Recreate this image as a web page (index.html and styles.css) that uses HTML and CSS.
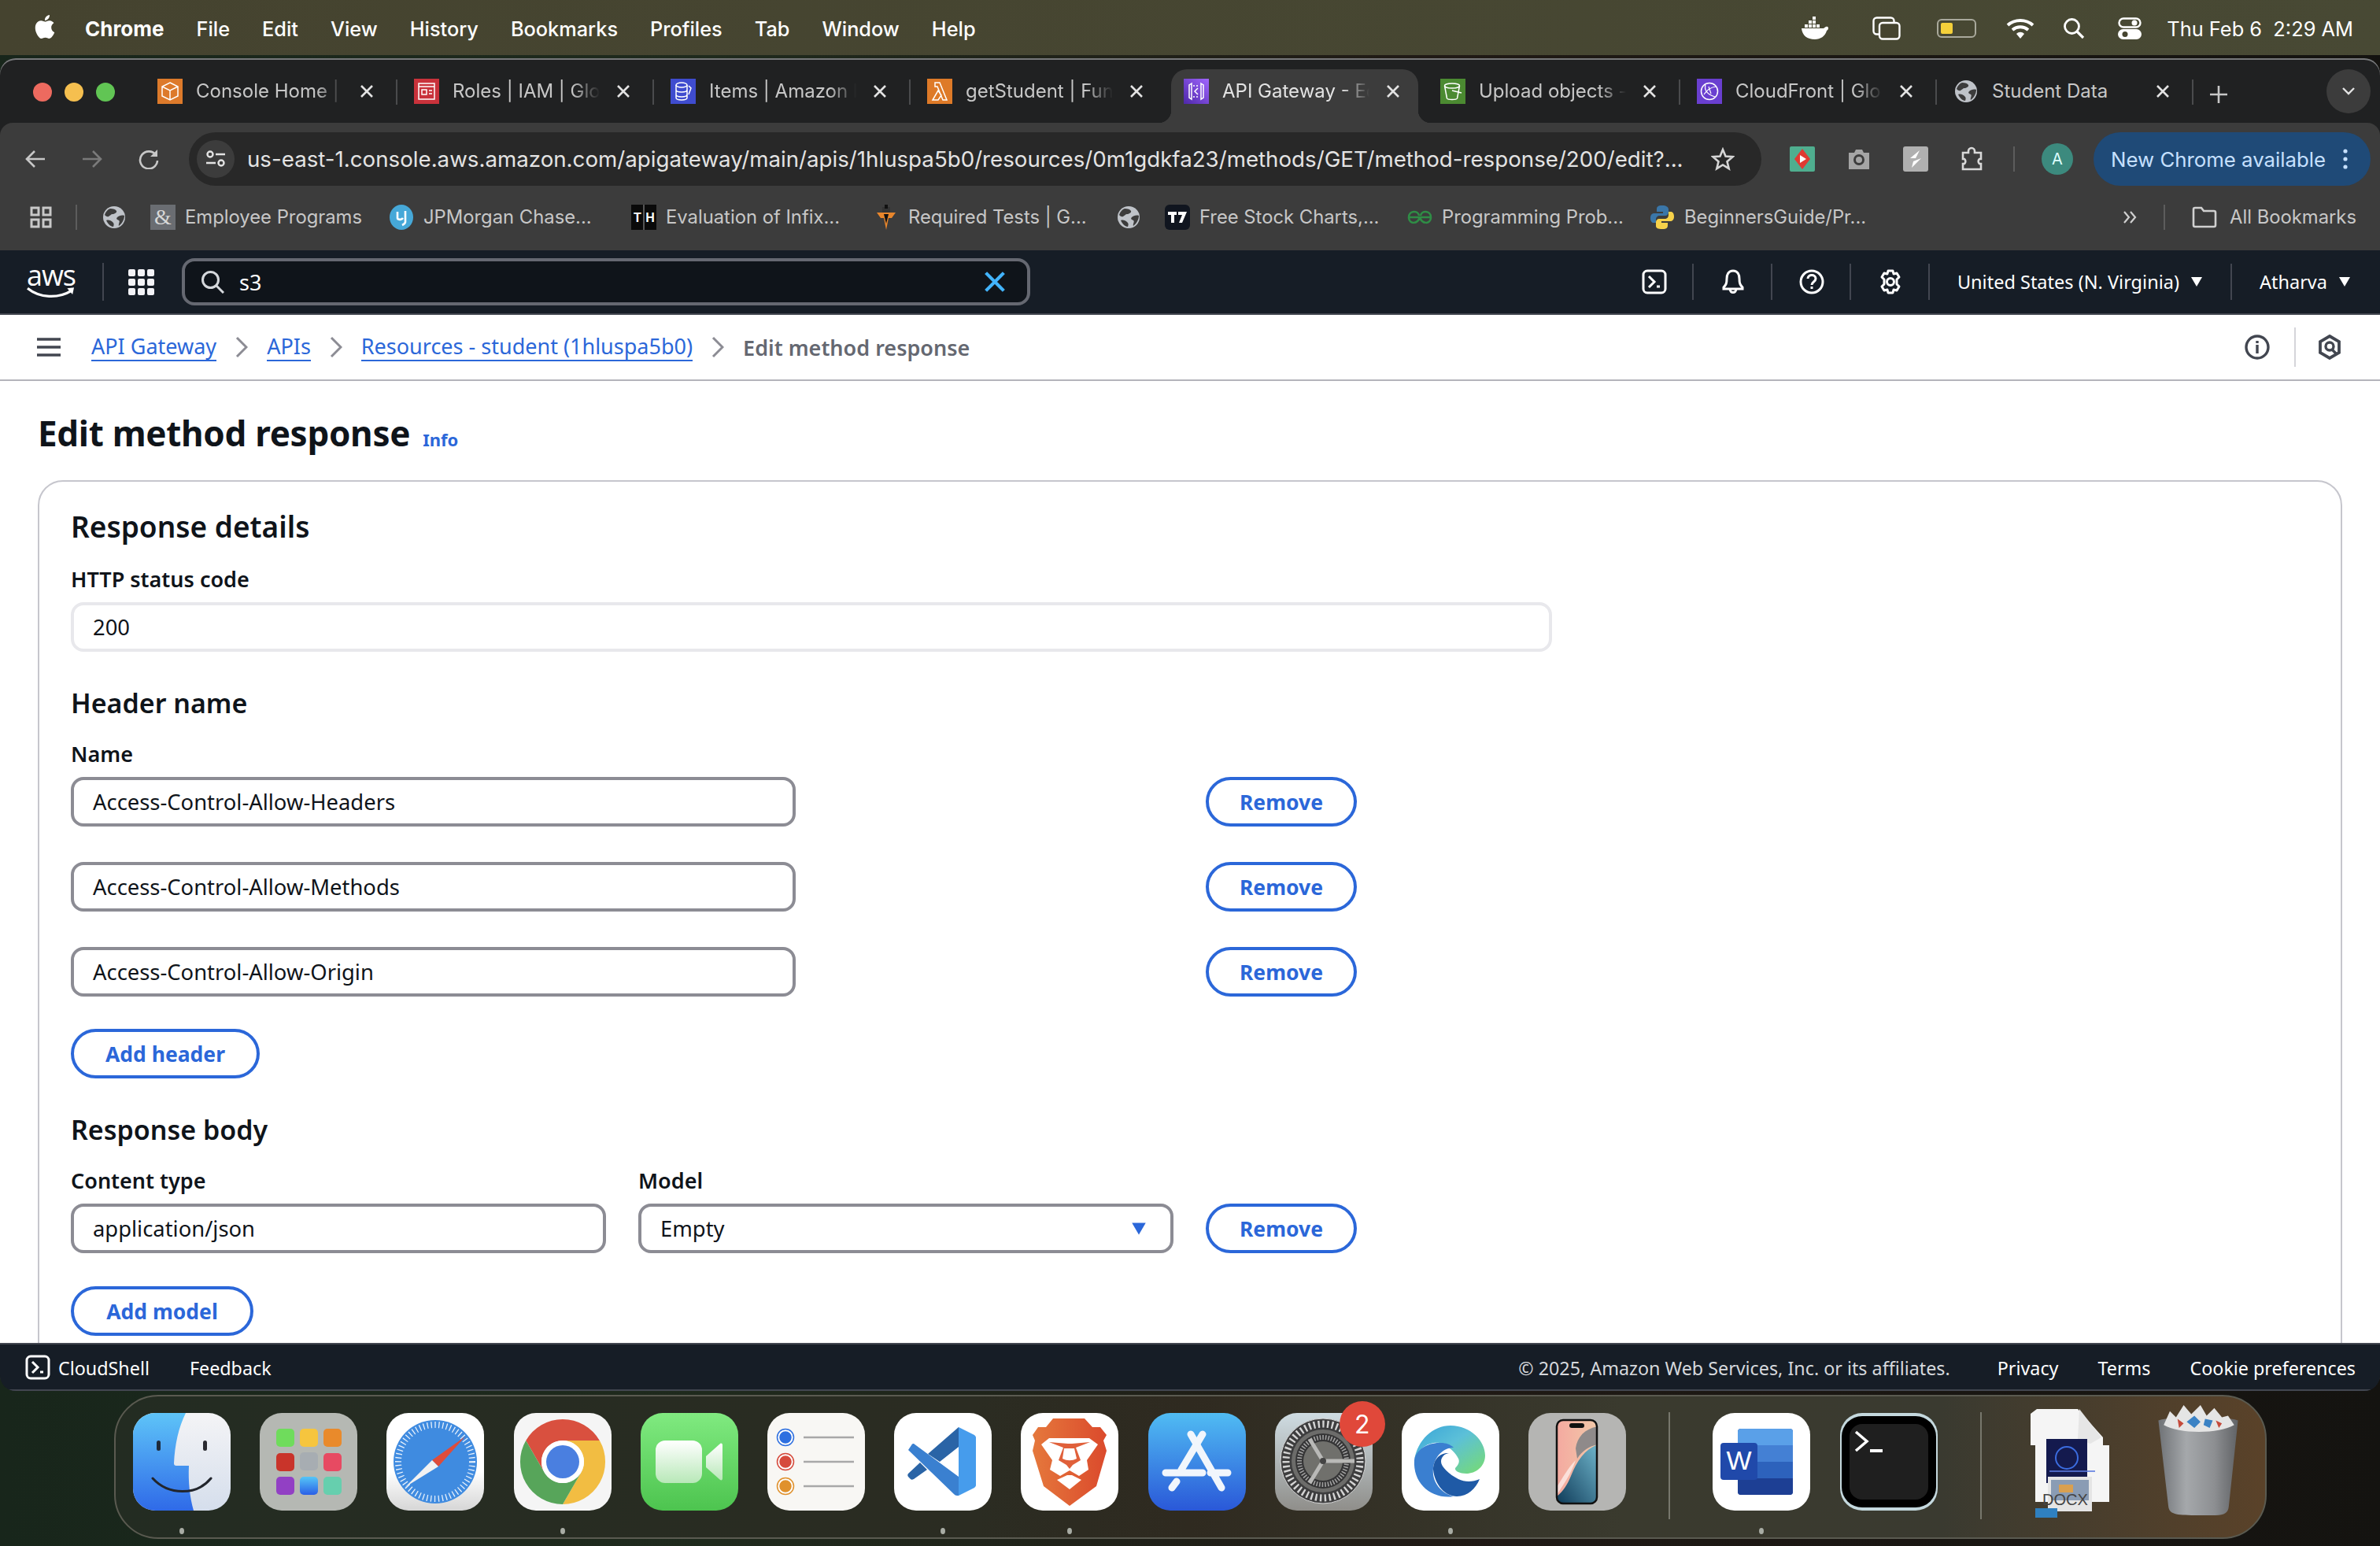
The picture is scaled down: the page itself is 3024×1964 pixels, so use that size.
FILE: index.html
```html
<!DOCTYPE html>
<html lang="en">

<head>
    <meta charset="UTF-8">
    <meta name="viewport" content="width=device-width, initial-scale=1.0">
    <title>Edit method response</title>
    <link rel="stylesheet" href="styles.css">
</head>

<body>
    <svg class="sprite">
        <symbol id="x" viewBox="0 0 16 16"><path d="M1 1l14 14M15 1L1 15" fill="none" stroke="currentColor" stroke-width="2.6"/></symbol>
        <symbol id="globe" viewBox="0 0 28 28"><circle cx="14" cy="14" r="14" fill="#bfc3c9"/><path d="M9 3c4 0 7 1 8 3s-3 4-5 4-3 2-5 3-4-1-5-2c1-4 4-7 7-8zM27 12c-3-1-7 0-9 2s0 3 2 4-1 5 0 7c4-3 7-8 7-13zM4 18c3-1 6 0 8 2s2 3 1 6c-4 0-7-4-9-8z" fill="#3c3c3c"/></symbol>
        <symbol id="caret" viewBox="0 0 16 16"><path d="M1 2h14L8 14z" fill="currentColor"/></symbol>
        <symbol id="shell" viewBox="0 0 32 32"><rect x="2" y="2" width="28" height="28" rx="5" fill="none" stroke="currentColor" stroke-width="3"/><path d="M9 9l7 7-7 7M19 22h4" fill="none" stroke="currentColor" stroke-width="3"/></symbol>
    </svg>

    <header class="menubar">
        <svg class="apple" viewBox="0 0 24 24"><path fill="#fff" d="M12.152 6.896c-.948 0-2.415-1.078-3.96-1.04-2.04.027-3.91 1.183-4.961 3.014-2.117 3.675-.546 9.103 1.519 12.09 1.013 1.454 2.208 3.09 3.792 3.039 1.52-.065 2.09-.987 3.935-.987 1.831 0 2.35.987 3.96.948 1.637-.026 2.676-1.48 3.676-2.948 1.156-1.688 1.636-3.325 1.662-3.415-.039-.013-3.182-1.221-3.22-4.857-.026-3.04 2.48-4.494 2.597-4.559-1.429-2.09-3.623-2.324-4.39-2.376-2-.156-3.675 1.09-4.61 1.09zM15.53 3.83c.843-1.012 1.4-2.427 1.245-3.83-1.207.052-2.662.805-3.532 1.818-.78.896-1.454 2.338-1.273 3.714 1.338.104 2.715-.688 3.559-1.701"/></svg>
        <nav class="menu">
            <b>Chrome</b><span>File</span><span>Edit</span><span>View</span><span>History</span><span>Bookmarks</span><span>Profiles</span><span>Tab</span><span>Window</span><span>Help</span>
        </nav>
        <div class="status">
            <svg class="status-docker" viewBox="0 0 38 30"><path fill="#fff" d="M2 15h28c1 0 3-3 5-2s1 4-1 5c-2 7-8 11-15 11C9 29 3 24 2 15z"/><path fill="#fff" d="M6 10h4v4H6zM11 10h4v4h-4zM16 10h4v4h-4zM21 10h4v4h-4zM11 5h4v4h-4zM16 5h4v4h-4zM16 0h4v4h-4z"/></svg>
            <svg class="status-windows" viewBox="0 0 36 30"><rect x="1.5" y="1.5" width="26" height="21" rx="4" fill="none" stroke="#fff" stroke-width="2.4"/><rect x="9" y="8" width="25.5" height="20.5" rx="4" fill="#45442f" stroke="#fff" stroke-width="2.4"/></svg>
            <div class="battery"><i></i></div>
            <svg class="status-wifi" viewBox="0 0 36 28"><path d="M2 10c9-8 23-8 32 0M8 16c6-5 14-5 20 0" fill="none" stroke="#fff" stroke-width="4"/><path d="M13 21c3-3 7-3 10 0l-5 6z" fill="#fff"/></svg>
            <svg class="status-search" viewBox="0 0 28 28"><circle cx="11.5" cy="11.5" r="9" fill="none" stroke="#fff" stroke-width="2.8"/><path d="M18 18l8 8" stroke="#fff" stroke-width="3.2"/></svg>
            <svg class="status-control" viewBox="0 0 30 28"><rect x="1.5" y="1.5" width="27" height="11" rx="5.5" fill="none" stroke="#fff" stroke-width="2.4"/><circle cx="21" cy="7" r="3.5" fill="#fff"/><rect x="0" y="15" width="30" height="13" rx="6.5" fill="#fff"/><circle cx="9" cy="21.5" r="3.5" fill="#45442f"/></svg>
            <span class="clock">Thu Feb 6&nbsp; 2:29 AM</span>
        </div>
    </header>

    <div class="window">
        <div class="tabstrip">
            <div class="lights"><i class="red"></i><i class="yellow"></i><i class="green"></i></div>

            <div class="tab">
                <svg class="fav" viewBox="0 0 32 32"><rect width="32" height="32" fill="#dd7a2b"/><path d="M16 5l10 5v12l-10 5-10-5V10zM6 10l10 5 10-5M16 15v12" fill="none" stroke="#fff" stroke-width="1.5"/></svg>
                <span class="tab-title">Console Home |</span>
                <svg class="tab-x"><use href="#x"/></svg>
            </div>
            <div class="tab">
                <svg class="fav" viewBox="0 0 32 32"><rect width="32" height="32" fill="#c9323b"/><rect x="6" y="6" width="20" height="20" fill="none" stroke="#fff" stroke-width="1.5"/><path d="M6 10h20M19 15h4M19 19h4" stroke="#fff" stroke-width="1.5"/><rect x="10" y="14" width="6" height="6" fill="none" stroke="#fff" stroke-width="1.5"/></svg>
                <span class="tab-title">Roles | IAM | Glo</span>
                <svg class="tab-x"><use href="#x"/></svg>
            </div>
            <div class="tab">
                <svg class="fav" viewBox="0 0 32 32"><rect width="32" height="32" fill="#3f4ccf"/><ellipse cx="14" cy="8" rx="7" ry="3" fill="none" stroke="#fff" stroke-width="1.5"/><path d="M7 8v16c0 4 14 4 14 0V8M7 14c0 4 14 4 14 0M7 20c0 4 14 4 14 0M23 9l3 3-3 8" fill="none" stroke="#fff" stroke-width="1.5"/></svg>
                <span class="tab-title">Items | Amazon I</span>
                <svg class="tab-x"><use href="#x"/></svg>
            </div>
            <div class="tab tab-nosep">
                <svg class="fav" viewBox="0 0 32 32"><rect width="32" height="32" fill="#de7a28"/><path d="M10 5h6l9 22h-5L13 10h-3zM14 15l4 6-4 6H7z" fill="none" stroke="#fff" stroke-width="1.5"/></svg>
                <span class="tab-title">getStudent | Fun</span>
                <svg class="tab-x"><use href="#x"/></svg>
            </div>
            <div class="tab tab-active">
                <svg class="fav" viewBox="0 0 32 32"><defs><linearGradient id="apiBg" x1="0" y1="1" x2="1" y2="0"><stop offset="0" stop-color="#4d27a8"/><stop offset="1" stop-color="#a166ff"/></linearGradient></defs><rect width="32" height="32" fill="url(#apiBg)"/><path d="M10 6L7 8v16l3 2zM22 6l3 2v16l-3 2zM18 12l-4 4 4 4" fill="none" stroke="#fff" stroke-width="1.5"/><path d="M12 9h8M12 23h8" stroke="#fff" stroke-width="1.5" stroke-dasharray="2 2"/></svg>
                <span class="tab-title">API Gateway - Ed</span>
                <svg class="tab-x"><use href="#x"/></svg>
            </div>
            <div class="tab">
                <svg class="fav" viewBox="0 0 32 32"><rect width="32" height="32" fill="#4b8a31"/><ellipse cx="15" cy="9" rx="9.5" ry="3" fill="none" stroke="#fff" stroke-width="1.5"/><path d="M5.5 9l3 16c1 2 12 2 13 0l3-16M15 15l12 3" fill="none" stroke="#fff" stroke-width="1.5"/></svg>
                <span class="tab-title">Upload objects -</span>
                <svg class="tab-x"><use href="#x"/></svg>
            </div>
            <div class="tab">
                <svg class="fav" viewBox="0 0 32 32"><rect width="32" height="32" fill="#6a3fd0"/><circle cx="16" cy="16" r="10.5" fill="none" stroke="#fff" stroke-width="1.5"/><path d="M11 8c-2 6 2 12 12 15M9 20c4-6 8-9 15-10M15 10l3 9" fill="none" stroke="#fff" stroke-width="1.2"/></svg>
                <span class="tab-title">CloudFront | Glo</span>
                <svg class="tab-x"><use href="#x"/></svg>
            </div>
            <div class="tab">
                <svg class="fav fav-globe"><use href="#globe"/></svg>
                <span class="tab-title tab-title-full">Student Data</span>
                <svg class="tab-x"><use href="#x"/></svg>
            </div>
            <svg class="tab-plus" viewBox="0 0 22 22"><path d="M11 0v22M0 11h22" stroke="#c7c7c7" stroke-width="2.6"/></svg>
            <div class="tab-search"><svg viewBox="0 0 18 12"><path d="M2 2l7 7 7-7" fill="none" stroke="#e3e3e3" stroke-width="2.4"/></svg></div>
        </div>

        <div class="toolbar">
            <svg class="nav-icon" viewBox="0 0 26 26"><path d="M25 13H3M12 3L2 13l10 10" fill="none" stroke="#c7c7c7" stroke-width="2.6"/></svg>
            <svg class="nav-icon nav-dim" viewBox="0 0 26 26"><path d="M1 13h22M14 3l10 10-10 10" fill="none" stroke="#7a7a7a" stroke-width="2.6"/></svg>
            <svg class="nav-icon" viewBox="0 0 26 26"><path d="M22 8a11 11 0 1 0 2 7" fill="none" stroke="#c7c7c7" stroke-width="2.6"/><path d="M24 1v9h-9z" fill="#c7c7c7"/></svg>
            <div class="address">
                <div class="site-chip"><svg viewBox="0 0 26 22"><circle cx="6" cy="5" r="3.5" fill="none" stroke="#e3e3e3" stroke-width="2.4"/><path d="M13 5h12M1 16h12" stroke="#e3e3e3" stroke-width="2.4"/><circle cx="20" cy="16" r="3.5" fill="none" stroke="#e3e3e3" stroke-width="2.4"/></svg></div>
                <span class="url">us-east-1.console.aws.amazon.com/apigateway/main/apis/1hluspa5b0/resources/0m1gdkfa23/methods/GET/method-response/200/edit?...</span>
                <svg class="star" viewBox="0 0 30 30"><path d="M15 3l3.5 8.5 9 .7-7 6 2.2 9L15 22.5 7.3 27.2l2.2-9-7-6 9-.7z" fill="none" stroke="#d5d5d5" stroke-width="2.6"/></svg>
            </div>
            <div class="ext-row">
                <svg class="ext" viewBox="0 0 32 32"><rect width="32" height="32" rx="2" fill="#4fae8f"/><path d="M16 3l10 13-10 13L6 16z" fill="#e03a32"/><path d="M13 11l8 5-8 5z" fill="#fff"/></svg>
                <svg class="ext" viewBox="0 0 32 32"><path d="M3 8h7l2-4h8l2 4h7v21H3z" fill="#a5a5a5"/><circle cx="16" cy="17" r="7" fill="#3c3c3c"/><circle cx="16" cy="17" r="4" fill="#a5a5a5"/></svg>
                <svg class="ext" viewBox="0 0 32 32"><rect width="32" height="32" rx="3" fill="#b0b0b0"/><path d="M21 5L9 15h7zM23 15L11 27l2-8z" fill="#fff"/></svg>
                <svg class="ext" viewBox="0 0 32 32"><path d="M4 8h7V6a4 4 0 0 1 8 0v2h8v8h-2a4 4 0 0 0 0 6h2v7H4v-7h2a4 4 0 0 0 0-6H4z" fill="none" stroke="#d8d8d8" stroke-width="2.6"/></svg>
                <i class="tool-sep ext-sep"></i>
                <div class="avatar">A</div>
            </div>
            <div class="update-pill"><span>New Chrome available</span><svg viewBox="0 0 6 28"><circle cx="3" cy="4" r="2.6" fill="#c6e0ff"/><circle cx="3" cy="14" r="2.6" fill="#c6e0ff"/><circle cx="3" cy="24" r="2.6" fill="#c6e0ff"/></svg></div>
        </div>

        <div class="bookmarks">
            <svg class="apps" viewBox="0 0 28 28"><path d="M2 2h9v9H2zM17 2h9v9h-9zM2 17h9v9H2zM17 17h9v9h-9z" fill="none" stroke="#c8c8c8" stroke-width="3"/></svg>
            <i class="tool-sep bm-sep"></i>
            <div class="bm bm-icon"><svg class="fav fav-globe"><use href="#globe"/></svg></div>
            <div class="bm bm-first">
                <svg class="fav" viewBox="0 0 32 32"><rect width="32" height="32" fill="#6a6d72"/><text x="16" y="25" text-anchor="middle" font-family="Liberation Serif" font-size="28" fill="#d8d8d8">&amp;</text></svg>
                <span>Employee Programs</span>
            </div>
            <div class="bm">
                <svg class="fav" viewBox="0 0 32 32"><ellipse cx="16" cy="16" rx="15" ry="16" fill="#46a8d8"/><path d="M11 9v8c0 2 5 3 7 0M21 8v14c0 2-2 3-4 4" fill="none" stroke="#fff" stroke-width="2.6"/></svg>
                <span>JPMorgan Chase...</span>
            </div>
            <div class="bm">
                <svg class="fav" viewBox="0 0 32 32"><rect width="32" height="32" fill="#0a0a0a"/><path d="M15 0h2v32h-2z" fill="#555"/><text x="8" y="22" text-anchor="middle" font-family="Liberation Sans" font-weight="700" font-size="16" fill="#fff">T</text><text x="24" y="22" text-anchor="middle" font-family="Liberation Sans" font-weight="700" font-size="16" fill="#fff">H</text></svg>
                <span>Evaluation of Infix...</span>
            </div>
            <div class="bm">
                <svg class="fav" viewBox="0 0 28 32"><path d="M2 10h24l-5 7h-4l-3 15-3-15H7z" fill="#e8862c"/><path d="M9 3h10v7H9z" fill="#333"/><path d="M12 0h4v5h-4zM11 12h6l-3 12z" fill="#111"/></svg>
                <span>Required Tests | G...</span>
            </div>
            <div class="bm bm-icon"><svg class="fav fav-globe"><use href="#globe"/></svg></div>
            <div class="bm">
                <svg class="fav" viewBox="0 0 32 32"><rect width="32" height="32" rx="6" fill="#10151f"/><path d="M4 9h11v4h-3v10H8V13H4zM17 9h11l-6 14h-4l4-10h-5z" fill="#fff"/></svg>
                <span>Free Stock Charts,...</span>
            </div>
            <div class="bm">
                <svg class="fav" viewBox="0 0 32 20"><path d="M16 10H2c0-9 12-9 13-2M16 10h14c0-9-12-9-13-2M2 11c1 8 11 8 14-1M30 11c-1 8-11 8-14-1" fill="none" stroke="#2f8d46" stroke-width="2.5"/></svg>
                <span>Programming Prob...</span>
            </div>
            <div class="bm">
                <svg class="fav" viewBox="0 0 32 32"><path d="M16 1c-6 0-7 2-7 5v3h8v2H6c-3 0-5 2-5 6s2 6 4 6h3v-4c0-3 2-5 5-5h7c2 0 4-2 4-4V6c0-3-3-5-8-5z" fill="#3a76a8"/><path d="M16 31c6 0 7-2 7-5v-3h-8v-2h11c3 0 5-2 5-6s-2-6-4-6h-3v4c0 3-2 5-5 5h-7c-2 0-4 2-4 4v5c0 3 3 4 8 4z" fill="#f7d24a"/></svg>
                <span>BeginnersGuide/Pr...</span>
            </div>
            <svg class="bm-more" viewBox="0 0 18 18"><path d="M2 2l6 7-6 7M10 2l6 7-6 7" fill="none" stroke="#d0d0d0" stroke-width="2.2"/></svg>
            <i class="tool-sep bm-sep2"></i>
            <svg class="folder" viewBox="0 0 32 28"><path d="M2 4a2 2 0 0 1 2-2h8l3 4h13a2 2 0 0 1 2 2v16a2 2 0 0 1-2 2H4a2 2 0 0 1-2-2z" fill="none" stroke="#d0d0d0" stroke-width="2.6"/></svg>
            <span class="bm-all">All Bookmarks</span>
        </div>

        <div class="aws-top">
            <div class="aws-logo">
                <span>aws</span>
                <svg viewBox="0 0 64 16"><path d="M1 2c16 13 40 14 58 3" fill="none" stroke="#fff" stroke-width="3.4"/><path d="M53 2l9-1-2 9z" fill="#fff"/></svg>
            </div>
            <i class="aws-sep"></i>
            <div class="aws-grid"><i></i><i></i><i></i><i></i><i></i><i></i><i></i><i></i><i></i></div>
            <div class="aws-search">
                <svg class="aws-search-icon" viewBox="0 0 30 30"><circle cx="12.5" cy="12.5" r="10" fill="none" stroke="#d5d8dc" stroke-width="3"/><path d="M20 20l9 9" stroke="#d5d8dc" stroke-width="3"/></svg>
                <span>s3</span>
                <svg class="aws-search-x"><use href="#x"/></svg>
            </div>
            <div class="aws-actions">
                <svg class="aws-icon"><use href="#shell"/></svg>
                <i></i>
                <svg class="aws-icon" viewBox="0 0 32 32"><path d="M16 2c-6 0-8 5-8 10 0 6-1 8-4 11v2h24v-2c-3-3-4-5-4-11 0-5-2-10-8-10zM12 25c0 6 8 6 8 0" fill="none" stroke="#fff" stroke-width="3"/></svg>
                <i></i>
                <svg class="aws-icon" viewBox="0 0 32 32"><circle cx="16" cy="16" r="14" fill="none" stroke="#fff" stroke-width="3"/><path d="M11 12c0-6 10-6 10 0 0 4-5 4-5 8" fill="none" stroke="#fff" stroke-width="3"/><path d="M14.5 22h3v3h-3z" fill="#fff"/></svg>
                <i></i>
                <svg class="aws-icon" viewBox="0 0 32 32"><path d="M13 2h6l1 4 4-1 3 5-3 3v6l3 3-3 5-4-1-1 4h-6l-1-4-4 1-3-5 3-3v-6L5 10l3-5 4 1z" fill="none" stroke="#fff" stroke-width="3" stroke-linejoin="round"/><circle cx="16" cy="16" r="4.5" fill="none" stroke="#fff" stroke-width="3"/></svg>
                <i></i>
                <span class="aws-region">United States (N. Virginia)<svg><use href="#caret"/></svg></span>
                <i></i>
                <span class="aws-user">Atharva<svg><use href="#caret"/></svg></span>
            </div>
        </div>

        <div class="crumbs">
            <svg class="burger" viewBox="0 0 30 24"><path d="M0 2h30M0 12h30M0 22h30" stroke="#424650" stroke-width="3.4"/></svg>
            <a href="#">API Gateway</a>
            <svg class="crumb-arrow" viewBox="0 0 16 28"><path d="M2 2l12 12L2 26" fill="none" stroke="#8c8c94" stroke-width="3"/></svg>
            <a href="#">APIs</a>
            <svg class="crumb-arrow" viewBox="0 0 16 28"><path d="M2 2l12 12L2 26" fill="none" stroke="#8c8c94" stroke-width="3"/></svg>
            <a href="#">Resources - student (1hluspa5b0)</a>
            <svg class="crumb-arrow" viewBox="0 0 16 28"><path d="M2 2l12 12L2 26" fill="none" stroke="#8c8c94" stroke-width="3"/></svg>
            <strong>Edit method response</strong>
            <div class="crumb-tools">
                <svg viewBox="0 0 32 32"><circle cx="16" cy="16" r="14" fill="none" stroke="#424650" stroke-width="3.4"/><path d="M16 13v11M16 8v3" stroke="#424650" stroke-width="3.4"/></svg>
                <i></i>
                <svg viewBox="0 0 32 32"><path d="M16 2l12 7v14l-12 7-12-7V9z" fill="none" stroke="#424650" stroke-width="3.8"/><circle cx="16" cy="15" r="5" fill="none" stroke="#424650" stroke-width="3.4"/><path d="M19 19l5 5" stroke="#424650" stroke-width="3.4"/></svg>
            </div>
        </div>

        <main class="content">
            <div class="title-row">
                <h1>Edit method response</h1>
                <a href="#" class="info">Info</a>
            </div>
            <section class="card">
                <h2>Response details</h2>
                <label class="lbl lbl-first">HTTP status code</label>
                <div class="input input-off">200</div>

                <h2 class="h2-sub">Header name</h2>
                <label class="lbl">Name</label>
                <div class="row">
                    <div class="input input-name">Access-Control-Allow-Headers</div>
                    <button class="btn">Remove</button>
                </div>
                <div class="row row-next">
                    <div class="input input-name">Access-Control-Allow-Methods</div>
                    <button class="btn">Remove</button>
                </div>
                <div class="row row-next">
                    <div class="input input-name">Access-Control-Allow-Origin</div>
                    <button class="btn">Remove</button>
                </div>
                <button class="btn btn-add">Add header</button>

                <h2 class="h2-sub">Response body</h2>
                <div class="body-labels">
                    <label class="lbl">Content type</label>
                    <label class="lbl">Model</label>
                </div>
                <div class="body-row">
                    <div class="input">application/json</div>
                    <div class="input input-select">Empty<svg><use href="#caret"/></svg></div>
                    <button class="btn">Remove</button>
                </div>
                <button class="btn btn-add btn-add-model">Add model</button>
            </section>
        </main>

        <footer class="aws-foot">
            <svg class="foot-shell"><use href="#shell"/></svg>
            <span class="foot-cs">CloudShell</span>
            <span class="foot-fb">Feedback</span>
            <div class="foot-right">
                <span class="foot-copy">&copy; 2025, Amazon Web Services, Inc. or its affiliates.</span>
                <span>Privacy</span>
                <span>Terms</span>
                <span>Cookie preferences</span>
            </div>
        </footer>
    </div>

    <div class="dock">
        <div class="dock-item on">
            <svg viewBox="0 0 124 124"><defs><linearGradient id="fnL" x1="0" y1="0" x2="0" y2="1"><stop offset="0" stop-color="#5ec4f8"/><stop offset="1" stop-color="#2f6ae8"/></linearGradient><linearGradient id="fnR" x1="0" y1="0" x2="0" y2="1"><stop offset="0" stop-color="#f4f4f6"/><stop offset="1" stop-color="#d5deec"/></linearGradient></defs><rect width="124" height="124" rx="28" fill="url(#fnR)"/><path d="M28 0h39c-9 18-14 40-15 64 0 2 1 3 3 3h16c-1 20 1 40 6 57H28A28 28 0 0 1 0 96V28A28 28 0 0 1 28 0z" fill="url(#fnL)"/><rect x="30" y="35" width="5" height="13" rx="2.5" fill="#1e2a3a"/><rect x="89" y="35" width="5" height="13" rx="2.5" fill="#2a2a30"/><path d="M25 83c20 22 56 22 74 0" fill="none" stroke="#22252c" stroke-width="3" stroke-linecap="round"/></svg>
        </div>
        <div class="dock-item">
            <svg viewBox="0 0 124 124"><defs><linearGradient id="lpBlue" x1="0" y1="0" x2="0" y2="1"><stop offset="0" stop-color="#55c6f7"/><stop offset="1" stop-color="#2a5fe6"/></linearGradient></defs><rect width="124" height="124" rx="28" fill="#b5b8b3"/><rect x="21" y="20" width="23" height="23" rx="5" fill="#6fdc5c"/><rect x="51" y="20" width="23" height="23" rx="5" fill="#f6c53e"/><rect x="81" y="20" width="23" height="23" rx="5" fill="#e98a2b"/><rect x="21" y="51" width="23" height="23" rx="5" fill="#c9342a"/><rect x="51" y="50" width="23" height="23" rx="5" fill="#a7adb2"/><rect x="81" y="51" width="23" height="23" rx="5" fill="#e74a62"/><rect x="21" y="81" width="23" height="23" rx="5" fill="#9240c4"/><rect x="51" y="81" width="23" height="23" rx="5" fill="url(#lpBlue)"/><rect x="81" y="81" width="23" height="23" rx="5" fill="#66cfae"/></svg>
        </div>
        <div class="dock-item">
            <svg viewBox="0 0 124 124"><defs><linearGradient id="sfBg" x1="0" y1="0" x2="0" y2="1"><stop offset=".6" stop-color="#fff"/><stop offset="1" stop-color="#d6d6d6"/></linearGradient></defs><rect width="124" height="124" rx="28" fill="url(#sfBg)"/><circle cx="62" cy="62" r="53" fill="#3f8be0"/><circle cx="62" cy="62" r="47" fill="none" stroke="#e8f1fb" stroke-width="8" stroke-dasharray="1.3 3.6"/><path d="M100 30L58 60l8 8z" fill="#df4c3a"/><path d="M24 94l34-34 8 8z" fill="#f2f2f2"/></svg>
        </div>
        <div class="dock-item on">
            <svg viewBox="0 0 124 124"><rect width="124" height="124" rx="28" fill="#f5f5f5"/><path d="M15.2 35A54 54 0 0 1 108.8 35L62 35A27 27 0 0 0 38.6 75.5Z" fill="#d9503f"/><path d="M108.8 35A54 54 0 0 1 62 116L85.4 75.5A27 27 0 0 0 62 35Z" fill="#f2bd42"/><path d="M62 116A54 54 0 0 1 15.2 35L38.6 75.5A27 27 0 0 0 85.4 75.5Z" fill="#57a55a"/><circle cx="62" cy="62" r="27" fill="#fff"/><circle cx="62" cy="62" r="21" fill="#4a7fe0"/></svg>
        </div>
        <div class="dock-item">
            <svg viewBox="0 0 124 124"><defs><linearGradient id="ftBg" x1="0" y1="0" x2="0" y2="1"><stop offset="0" stop-color="#80ea80"/><stop offset="1" stop-color="#4dc44f"/></linearGradient><linearGradient id="ftCam" x1="0" y1="0" x2="0" y2="1"><stop offset="0" stop-color="#fff"/><stop offset="1" stop-color="#b8e8b8"/></linearGradient></defs><rect width="124" height="124" rx="28" fill="url(#ftBg)"/><rect x="19" y="35" width="59" height="54" rx="12" fill="url(#ftCam)"/><path d="M83 55l18-16c2-1 3 0 3 2v42c0 2-1 3-3 2L83 69z" fill="url(#ftCam)"/></svg>
        </div>
        <div class="dock-item">
            <svg viewBox="0 0 124 124"><rect width="124" height="124" rx="28" fill="#f8f7f4"/><circle cx="23" cy="31" r="8.5" fill="#2d6fe0" stroke="#fff" stroke-width="1.5"/><circle cx="23" cy="31" r="10.5" fill="none" stroke="#2d6fe0" stroke-width="1.5"/><circle cx="23" cy="62" r="8.5" fill="#d64a3c" stroke="#fff" stroke-width="1.5"/><circle cx="23" cy="62" r="10.5" fill="none" stroke="#d64a3c" stroke-width="1.5"/><circle cx="23" cy="93" r="8.5" fill="#e0912c" stroke="#fff" stroke-width="1.5"/><circle cx="23" cy="93" r="10.5" fill="none" stroke="#e0912c" stroke-width="1.5"/><path d="M46 31h64M46 62h64M46 93h64" stroke="#a8a8a8" stroke-width="2.5"/></svg>
        </div>
        <div class="dock-item on">
            <svg viewBox="0 0 124 124"><rect width="124" height="124" rx="28" fill="#fff"/><path d="M82 18L43 52l15 10 24-19zM18 77l15-14 9 9-17 12c-2 1-3 1-4 0l-3-3c-1-1-1-3 0-4z" fill="#2a64a6"/><path d="M18 47l4-6c1-2 2-2 3-2l57 42v24c-3 0-4 0-6-2z" fill="#3a80d0"/><path d="M82 18l20 10c1 1 2 2 2 3v61c0 1-1 2-2 3l-20 10z" fill="#469cec"/></svg>
        </div>
        <div class="dock-item on">
            <svg viewBox="0 0 124 124"><defs><linearGradient id="brBg" x1="0" y1="0" x2="1" y2="0"><stop offset="0" stop-color="#e5783c"/><stop offset="1" stop-color="#db4a2c"/></linearGradient></defs><rect width="124" height="124" rx="28" fill="#fff"/><path d="M41 7h40l10 11h10l8 10-4 7 4 13-13 45-34 25-33-25-14-45 3-13-3-7 7-10h10z" fill="url(#brBg)"/><path d="M36 32h51l11 8-14 20 2 12-12 8-12-7-12 7-13-8 3-12-14-20z" fill="#fff"/><path d="M36 37l24 2h5l23-2-18 7 6 16-10 6-4 5-4-5-10-6 6-16z" fill="#e0603a"/><path d="M55 45h13l3 13c-6 3-12 3-18 0z" fill="#fff"/><path d="M46 85l13-6h6l12 6-15 12z" fill="#fff"/></svg>
        </div>
        <div class="dock-item">
            <svg viewBox="0 0 124 124"><defs><linearGradient id="asBg" x1="0" y1="0" x2="0" y2="1"><stop offset="0" stop-color="#50bcf3"/><stop offset="1" stop-color="#2a58d8"/></linearGradient></defs><rect width="124" height="124" rx="28" fill="url(#asBg)"/><g fill="none" stroke="#f1f6fc" stroke-width="9" stroke-linecap="round"><path d="M54 27l39 68M79 76h22M36 87l-6 8"/><path d="M69 27L42 72M22 76h47"/></g></svg>
        </div>
        <div class="dock-item">
            <svg viewBox="0 0 124 124"><defs><linearGradient id="setBg" x1="0" y1="0" x2="0" y2="1"><stop offset="0" stop-color="#cfdce2"/><stop offset="1" stop-color="#8f8e8a"/></linearGradient></defs><rect width="124" height="124" rx="28" fill="url(#setBg)"/><circle cx="61" cy="61" r="54" fill="#3d3d3e" stroke="#d8d8d8" stroke-width="1"/><circle cx="61" cy="61" r="47" fill="none" stroke="#d4d4d4" stroke-width="9" stroke-dasharray="2.4 3.4"/><circle cx="61" cy="61" r="40" fill="#6c6c6a"/><circle cx="61" cy="61" r="35" fill="#343435"/><circle cx="61" cy="61" r="30" fill="none" stroke="#a0a0a0" stroke-width="6" stroke-dasharray="1.6 2"/><circle cx="61" cy="61" r="25" fill="#70706c"/><path d="M61 61h40M61 61L44 33M61 61L44 89" stroke="#b9b9b7" stroke-width="5"/><circle cx="61" cy="61" r="4" fill="#444"/></svg>
            <span class="dock-badge">2</span>
        </div>
        <div class="dock-item on">
            <svg viewBox="0 0 124 124"><defs><linearGradient id="edTop" x1="0" y1="0" x2="1" y2="1"><stop offset="0" stop-color="#38a4d8"/><stop offset=".45" stop-color="#5cc0d8"/><stop offset="1" stop-color="#78dc70"/></linearGradient></defs><rect width="124" height="124" rx="28" fill="#fff"/><path d="M16 60C20 34 40 16 62 16c26 0 44 20 44 38 0 14-12 23-24 23-8 0-15-3-14-7 4-4 6-8 4-12-4-8-12-16-24-20-14-2-28 8-32 22z" fill="url(#edTop)"/><path d="M16 60c2-14 18-23 34-22 6 0 12 2 16 6-12 0-24 10-26 26-2 18 10 32 26 36-28 4-52-16-50-46z" fill="#3a7fd0"/><path d="M60 51c-12-1-20 9-20 21 2 20 16 34 30 34s24-10 29-22c-9 4-19 4-27 0-12-6-22-16-22-22 0-6 4-10 10-11z" fill="#1f5aa6"/></svg>
        </div>
        <div class="dock-item">
            <svg viewBox="0 0 124 124"><defs><linearGradient id="phBlue" x1="1" y1="0" x2="0" y2="1"><stop offset="0" stop-color="#70b6cc"/><stop offset="1" stop-color="#0e3a58"/></linearGradient><linearGradient id="phPink" x1="0" y1="0" x2="1" y2="0"><stop offset="0" stop-color="#f4a9a0"/><stop offset="1" stop-color="#f2c8a8"/></linearGradient><clipPath id="phClip"><rect x="36" y="9" width="51" height="106" rx="8"/></clipPath></defs><rect width="124" height="124" rx="28" fill="#b5b5b3"/><g clip-path="url(#phClip)"><rect x="36" y="9" width="51" height="106" fill="url(#phPink)"/><path d="M88 17C72 20 62 30 60 45l2 13c6-10 16-16 26-18z" fill="#8f8a8a"/><path d="M88 40C72 46 62 60 54 80c-4 10-10 20-18 26v10h52z" fill="url(#phBlue)"/><path d="M60 60c-6 18-16 32-24 44V94c8-12 14-24 24-34z" fill="#fff" opacity=".6"/></g><rect x="36" y="9" width="51" height="106" rx="8" fill="none" stroke="#111" stroke-width="2.5"/><rect x="52" y="13" width="19" height="6" rx="3" fill="#111"/></svg>
        </div>
        <i class="dock-sep"></i>
        <div class="dock-item on">
            <svg viewBox="0 0 124 124"><rect width="124" height="124" rx="28" fill="#fff"/><rect x="32" y="20" width="70" height="84" rx="4" fill="#2850a8"/><path d="M36 20h62a4 4 0 0 1 4 4v17H32V24a4 4 0 0 1 4-4z" fill="#5aa0e8"/><rect x="32" y="41" width="70" height="21" fill="#4480d4"/><rect x="32" y="62" width="70" height="21" fill="#2d62bc"/><path d="M32 83h70v17a4 4 0 0 1-4 4H36a4 4 0 0 1-4-4z" fill="#1d3f94"/><rect x="10" y="38" width="47" height="47" rx="4" fill="#2049aa"/><text x="33.5" y="72" text-anchor="middle" font-family="Liberation Sans" font-size="34" fill="#fff">W</text></svg>
        </div>
        <div class="dock-item">
            <svg viewBox="0 0 124 124"><rect width="124" height="124" rx="28" fill="#c4d8de"/><rect x="2" y="4" width="120" height="116" rx="26" fill="#000"/><rect x="12" y="14" width="100" height="96" rx="16" fill="#1f1f1f"/><path d="M20 24l14 12-14 12" fill="none" stroke="#fff" stroke-width="3.5"/><path d="M38 46h16v4H38z" fill="#fff"/></svg>
        </div>
        <i class="dock-sep dock-sep2"></i>
        <div class="dock-file">
            <svg viewBox="0 0 104 138"><path d="M8 0h52l32 36v10h8v72H6V46H0V6z" fill="#f5f5f5"/><path d="M62 0l28 36-14 8-16-6z" fill="#e6e6e6"/><rect x="20" y="38" width="52" height="56" fill="#141a4e"/><rect x="24" y="78" width="58" height="2" fill="#5b7be0" opacity=".8"/><circle cx="46" cy="62" r="14" fill="none" stroke="#3b6ce0" stroke-width="2"/><rect x="22" y="86" width="56" height="44" fill="#e5e5e5"/><rect x="26" y="90" width="48" height="26" fill="#8a9cb4"/><rect x="36" y="96" width="18" height="10" fill="#d9a050"/><rect x="6" y="126" width="28" height="12" fill="#2f80c0"/><text x="44" y="122" text-anchor="middle" font-family="Liberation Sans" font-size="20" fill="#444">DOCX</text></svg>
        </div>
        <div class="dock-file dock-trash">
            <svg viewBox="0 0 110 146"><defs><linearGradient id="trBg" x1="0" y1="0" x2="1" y2="0"><stop offset="0" stop-color="#6f7276"/><stop offset=".35" stop-color="#a5a8ab"/><stop offset=".7" stop-color="#8d8f92"/><stop offset="1" stop-color="#606265"/></linearGradient></defs><path d="M3 22c20-6 84-6 104 0l-12 112c-1 14-12 12-39 12S17 146 16 134z" fill="url(#trBg)"/><path d="M10 28l8-18 8 8 10-16 10 12 12-12 8 14 10-10 10 12 8-2 8 12c-20 12-72 12-92 0z" fill="#e5e5e5"/><path d="M40 24l10-8 8 8-8 8zM64 20l10 2-4 10-8-4z" fill="#3b82c4"/><path d="M28 20l8 6-6 6zM78 22l8 4-4 6z" fill="#c44a3b"/></svg>
        </div>
    </div>
</body>

</html>
```

FILE: styles.css
```css
* {
    padding: 0;
    margin: 0;
    box-sizing: border-box;
}

html,
body {
    width: 3024px;
    height: 1964px;
    overflow: hidden;
}

body {
    display: flex;
    flex-direction: column;
    font-family: Inter, "Liberation Sans", sans-serif;
    background: linear-gradient(90deg, #18261b 0%, #1f2a1d 30%, #201a15 60%, #141310 100%);
}

a {
    text-decoration: none;
}

i {
    display: block;
}

.sprite {
    display: none;
}

/* mac menu bar */
.menubar {
    height: 70px;
    flex: none;
    display: flex;
    align-items: center;
    padding: 2px 0 0 42px;
    color: #fff;
    font-size: 25.3px;
    background: linear-gradient(90deg, #45432f, #484934);
}

.apple {
    width: 30px;
    height: 34px;
    margin-top: -4px;
}

.menu {
    display: flex;
    gap: 41px;
    margin-left: 36px;
    font-weight: 500;
}

.menu b {
    font-size: 26px;
    font-weight: 700;
}

.status {
    margin-left: auto;
    display: flex;
    align-items: center;
    padding-right: 34px;
}

.status svg,
.battery {
    flex: none;
}

.status-docker {
    width: 38px;
    height: 30px;
}

.status-windows {
    width: 36px;
    height: 30px;
    margin-left: 54px;
}

.battery {
    width: 50px;
    height: 24px;
    margin-left: 46px;
    padding: 3px;
    border: 2px solid #a9a99c;
    border-radius: 6px;
}

.battery i {
    width: 15px;
    height: 14px;
    background: #f4d03a;
    border-radius: 2px;
}

.status-wifi {
    width: 36px;
    height: 28px;
    margin-left: 38px;
}

.status-search {
    width: 28px;
    height: 28px;
    margin-left: 36px;
}

.status-control {
    width: 30px;
    height: 28px;
    margin-left: 42px;
}

.clock {
    margin-left: 32px;
    font-size: 25.4px;
    white-space: nowrap;
}

/* chrome window */
.window {
    margin-top: 4px;
    height: 1693px;
    flex: none;
    display: flex;
    flex-direction: column;
    overflow: hidden;
    background: #202122;
    border-radius: 20px;
    box-shadow: inset 0 2px 0 #77787a;
}

.tabstrip {
    height: 82px;
    flex: none;
    display: flex;
    align-items: flex-start;
    padding-top: 14px;
}

.lights {
    width: 184px;
    flex: none;
    display: flex;
    gap: 16px;
    padding: 17px 0 0 42px;
}

.lights i {
    width: 24px;
    height: 24px;
    border-radius: 50%;
}

.lights .red {
    background: #ed6a5f;
}

.lights .yellow {
    background: #f5bf4f;
}

.lights .green {
    background: #61c554;
}

.tab {
    width: 314px;
    height: 68px;
    flex: none;
    margin-right: 12px;
    padding: 12px 24px 0 16px;
    display: flex;
    align-items: flex-start;
    position: relative;
    color: #c7c7c7;
    font-size: 24px;
    line-height: 32px;
}

.tab::after {
    content: "";
    position: absolute;
    right: -7px;
    top: 13px;
    width: 2px;
    height: 32px;
    background: #4a4b4d;
}

.tab-nosep::after {
    display: none;
}

.tab-active {
    background: #3c3c3c;
    border-radius: 20px 20px 0 0;
    color: #e3e3e3;
}

.tab-active::before,
.tab-active::after {
    content: "";
    position: absolute;
    bottom: 0;
    top: auto;
    width: 16px;
    height: 16px;
}

.tab-active::before {
    left: -16px;
    background: radial-gradient(circle at 0 0, transparent 16px, #3c3c3c 16.5px);
}

.tab-active::after {
    right: -16px;
    background: radial-gradient(circle at 100% 0, transparent 16px, #3c3c3c 16.5px);
}

.fav {
    width: 32px;
    height: 32px;
    flex: none;
}

.fav-globe {
    width: 28px;
    height: 28px;
    margin: 2px;
}

.tab-title {
    flex: 1;
    min-width: 0;
    margin-left: 17px;
    white-space: nowrap;
    -webkit-mask-image: linear-gradient(90deg, #000 78%, transparent 96%);
    mask-image: linear-gradient(90deg, #000 78%, transparent 96%);
}

.tab-title-full {
    -webkit-mask-image: none;
    mask-image: none;
}

.tab-x {
    width: 16px;
    height: 16px;
    flex: none;
    margin: 8px 0 0 14px;
    color: #e3e3e3;
}

.tab-plus {
    width: 22px;
    height: 22px;
    flex: none;
    margin: 21px 0 0 16px;
}

.tab-search {
    width: 56px;
    height: 56px;
    margin: 0 12px 0 auto;
    display: flex;
    align-items: center;
    justify-content: center;
    background: #3c3c3c;
    border-radius: 50%;
}

.tab-search svg {
    width: 18px;
    height: 12px;
}

.toolbar {
    height: 90px;
    flex: none;
    display: flex;
    align-items: flex-start;
    padding: 12px 12px 0 32px;
    background: #3c3c3c;
    border-radius: 16px 16px 0 0;
}

.nav-icon {
    width: 26px;
    height: 26px;
    flex: none;
    margin: 21px 46px 0 0;
}

.address {
    width: 1998px;
    height: 68px;
    flex: none;
    margin-left: -8px;
    display: flex;
    align-items: center;
    padding: 0 34px 0 10px;
    background: #282828;
    border-radius: 34px;
}

.site-chip {
    width: 48px;
    height: 48px;
    flex: none;
    display: flex;
    align-items: center;
    justify-content: center;
    background: #3c3c3c;
    border-radius: 50%;
}

.site-chip svg {
    width: 26px;
    height: 22px;
}

.url {
    margin-left: 16px;
    color: #e3e3e3;
    font-size: 27.7px;
    white-space: nowrap;
}

.star {
    width: 30px;
    height: 30px;
    margin-left: auto;
}

.ext-row {
    display: flex;
    align-items: center;
    height: 68px;
    margin-left: 36px;
}

.ext {
    width: 32px;
    height: 32px;
    flex: none;
    margin-right: 40px;
}

.tool-sep {
    width: 2px;
    height: 32px;
    background: #5c5c5c;
}

.ext-sep {
    margin-left: -4px;
}

.avatar {
    width: 40px;
    height: 40px;
    margin-left: 34px;
    display: flex;
    align-items: center;
    justify-content: center;
    color: #dff;
    font-size: 20px;
    background: #3c8a7e;
    border-radius: 50%;
}

.update-pill {
    width: 352px;
    height: 68px;
    margin-left: 26px;
    display: flex;
    align-items: center;
    padding-left: 22px;
    color: #c6e0ff;
    font-size: 25.8px;
    background: #1f4a77;
    border-radius: 34px;
}

.update-pill span {
    white-space: nowrap;
}

.update-pill svg {
    width: 6px;
    height: 28px;
    margin-left: 22px;
}

.bookmarks {
    height: 72px;
    flex: none;
    display: flex;
    align-items: flex-start;
    padding: 14px 0 0 38px;
    color: #c7c7c7;
    font-size: 23.8px;
    line-height: 32px;
    background: #3c3c3c;
}

.apps {
    width: 28px;
    height: 28px;
    flex: none;
    margin-top: 2px;
}

.bm-sep {
    margin-left: 30px;
    flex: none;
}

.bm {
    width: 308px;
    flex: none;
    display: flex;
    gap: 12px;
    white-space: nowrap;
}

.bm-first {
    width: 303px;
}

.bm-icon {
    width: 62px;
}

.bm-sep + .bm-icon {
    margin-left: 31px;
}

.bm-more {
    width: 18px;
    height: 18px;
    flex: none;
    margin: 7px 0 0 293px;
}

.bm-sep2 {
    flex: none;
    margin-left: 34px;
}

.folder {
    width: 32px;
    height: 28px;
    flex: none;
    margin: 2px 0 0 34px;
}

.bm-all {
    margin-left: 16px;
    white-space: nowrap;
}

/* aws console header */
.aws-top {
    height: 82px;
    flex: none;
    display: flex;
    align-items: center;
    padding-left: 34px;
    color: #fff;
    font-family: "Noto Sans", sans-serif;
    font-size: 23.5px;
    background: #161d26;
    border-bottom: 2px solid #424650;
}

.aws-logo {
    width: 62px;
    flex: none;
    display: flex;
    flex-direction: column;
    align-items: center;
}

.aws-logo span {
    font-family: "Open Sans", sans-serif;
    font-size: 36px;
    line-height: 28px;
    letter-spacing: -1px;
}

.aws-logo svg {
    width: 62px;
    height: 16px;
}

.aws-sep {
    width: 2px;
    height: 48px;
    flex: none;
    margin-left: 34px;
    background: #424650;
}

.aws-grid {
    width: 33px;
    flex: none;
    display: grid;
    grid-template-columns: repeat(3, 9px);
    gap: 3px;
    margin-left: 31px;
}

.aws-grid i {
    height: 9px;
    background: #f3f3f7;
    border-radius: 2px;
}

.aws-search {
    width: 1078px;
    height: 60px;
    flex: none;
    margin-left: 35px;
    display: flex;
    align-items: center;
    padding: 0 28px 0 20px;
    border: 4px solid #656871;
    border-radius: 16px;
    background: #0f141a;
    font-size: 27px;
}

.aws-search-icon {
    width: 30px;
    height: 30px;
    flex: none;
}

.aws-search span {
    margin-left: 19px;
}

.aws-search-x {
    width: 26px;
    height: 26px;
    margin-left: auto;
    color: #42b4ff;
}

.aws-actions {
    margin-left: auto;
    display: flex;
    align-items: center;
    padding-right: 37px;
    white-space: nowrap;
}

.aws-actions > i {
    width: 2px;
    height: 46px;
    background: #424650;
}

.aws-icon {
    width: 32px;
    height: 32px;
    margin: 0 32px 0 34px;
}

.aws-region,
.aws-user {
    display: flex;
    align-items: center;
    gap: 14px;
}

.aws-region {
    margin: 0 35px;
}

.aws-user {
    margin-left: 35px;
}

.aws-region svg,
.aws-user svg {
    width: 16px;
    height: 16px;
}

/* breadcrumbs */
.crumbs {
    height: 84px;
    flex: none;
    display: flex;
    align-items: center;
    padding: 0 48px 0 47px;
    font-family: "Noto Sans", sans-serif;
    font-size: 27px;
    background: #fff;
    border-bottom: 2px solid #b4b4bb;
}

.crumbs a {
    color: #2b67d9;
    border-bottom: 2px solid #2b67d9;
    line-height: 34px;
    white-space: nowrap;
}

.burger {
    width: 30px;
    height: 24px;
    flex: none;
    margin-right: 39px;
}

.crumb-arrow {
    width: 16px;
    height: 28px;
    flex: none;
    margin: 0 24px;
}

.crumbs strong {
    color: #656871;
    font-weight: 600;
    white-space: nowrap;
}

.crumb-tools {
    margin-left: auto;
    display: flex;
    align-items: center;
}

.crumb-tools svg {
    width: 32px;
    height: 32px;
}

.crumb-tools i {
    width: 2px;
    height: 50px;
    margin: 0 27px 0 31px;
    background: #d5d5da;
}

/* page */
.content {
    flex: 1;
    min-height: 0;
    overflow: hidden;
    padding: 0 48px;
    color: #0f141a;
    font-family: "Noto Sans", sans-serif;
    background: #fff;
}

.title-row {
    display: flex;
    align-items: baseline;
    gap: 16px;
    padding-top: 36px;
    height: 126px;
}

h1 {
    font-size: 44px;
    line-height: 60px;
    letter-spacing: -.3px;
    font-weight: 700;
    white-space: nowrap;
}

.info {
    color: #2b67d9;
    font-size: 22px;
    font-weight: 700;
}

.card {
    padding: 33px 40px 0;
    height: 1400px;
    border: 2px solid #c6c6cd;
    border-radius: 32px;
}

h2 {
    font-size: 37px;
    line-height: 48px;
    font-weight: 600;
}

.h2-sub {
    margin-top: 41px;
    font-size: 34px;
}

.lbl {
    display: block;
    margin-top: 23px;
    font-size: 27px;
    line-height: 36px;
    font-weight: 600;
}

.lbl-first {
    margin-top: 25px;
}

.input {
    height: 63px;
    margin-top: 11px;
    display: flex;
    align-items: center;
    padding: 0 24px;
    font-size: 27.4px;
    background: #fff;
    border: 4px solid #8c8c94;
    border-radius: 16px;
    white-space: nowrap;
}

.input-off {
    width: 1882px;
    border-color: #e8e8ec;
}

.input-name {
    width: 921px;
    margin-top: 0;
}

.row {
    display: flex;
    gap: 521px;
    margin-top: 11px;
}

.row-next {
    margin-top: 45px;
}

.btn {
    height: 63px;
    width: 192px;
    flex: none;
    color: #2b67d9;
    font-family: "Noto Sans", sans-serif;
    font-size: 26.5px;
    font-weight: 700;
    background: #fff;
    border: 4px solid #2b67d9;
    border-radius: 32px;
}

.btn-add {
    display: block;
    width: 240px;
    margin-top: 41px;
}

.btn-add-model {
    width: 232px;
    margin-top: 42px;
}

.body-labels {
    display: flex;
    gap: 41px;
}

.body-labels .lbl {
    width: 680px;
}

.body-row {
    display: flex;
    gap: 41px;
    margin-top: 11px;
}

.body-row .input {
    width: 680px;
    margin-top: 0;
}

.input-select {
    justify-content: space-between;
    padding-right: 30px;
}

.input-select svg {
    width: 20px;
    height: 20px;
    color: #2b67d9;
}

.aws-foot {
    height: 61px;
    flex: none;
    display: flex;
    align-items: center;
    padding: 2px 31px 0 32px;
    color: #fff;
    font-family: "Noto Sans", sans-serif;
    font-size: 23.3px;
    background: #161d26;
    border-top: 2px solid #424650;
    border-bottom: 2px solid #424650;
    white-space: nowrap;
}

.foot-shell {
    width: 32px;
    height: 32px;
    flex: none;
    margin-top: -2px;
}

.foot-cs {
    margin-left: 10px;
}

.foot-fb {
    margin-left: 51px;
}

.foot-right {
    margin-left: auto;
    display: flex;
    gap: 50px;
}

.foot-copy {
    margin-right: 10px;
    color: #d5d8dc;
}

/* dock */
.dock {
    width: 2735px;
    height: 183px;
    flex: none;
    margin: 5px 0 0 145px;
    display: flex;
    align-items: flex-start;
    padding: 21px 0 0 22px;
    gap: 37.2px;
    border: 2px solid #5a5a50;
    border-radius: 56px;
    background: linear-gradient(90deg, #232c22 0%, #2b2c22 40%, #2f2a20 50%, #3a3a2e 70%, #3a3a30 85%, #5a4229 100%);
}

.dock-item {
    width: 124px;
    height: 124px;
    flex: none;
    position: relative;
}

.dock-item svg {
    display: block;
    width: 124px;
    height: 124px;
}

.dock-item.on::after {
    content: "";
    position: absolute;
    left: 59px;
    top: 146px;
    width: 6px;
    height: 8px;
    border-radius: 50%;
    background: #a8aca4;
}

.dock-badge {
    position: absolute;
    right: -16px;
    top: -15px;
    width: 58px;
    height: 58px;
    display: flex;
    align-items: center;
    justify-content: center;
    color: #fff;
    font-size: 32px;
    background: #e0483a;
    border-radius: 50%;
}

.dock-sep {
    width: 2px;
    height: 136px;
    flex: none;
    margin: -1px 17px 0;
    background: #77776c;
}

.dock-sep2 {
    margin-right: 25px;
}

.dock-file {
    width: 104px;
    height: 138px;
    flex: none;
    margin-top: -5px;
}

.dock-file svg {
    display: block;
    width: 100%;
    height: 100%;
}

.dock-trash {
    width: 110px;
    height: 142px;
    margin: -12px 0 0 17px;
}
```
